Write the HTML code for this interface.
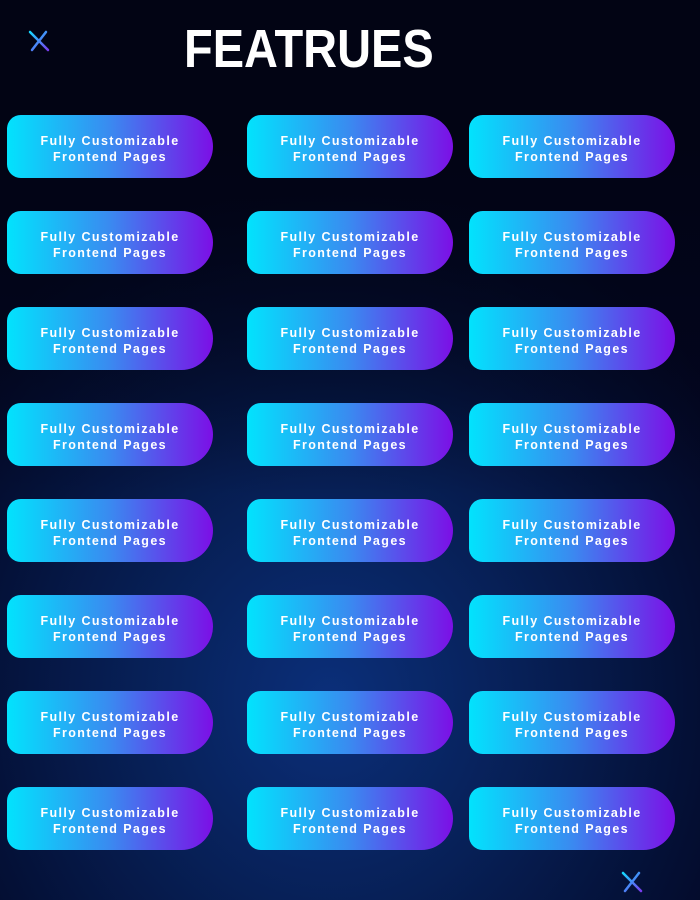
<!DOCTYPE html>
<html><head><meta charset="utf-8"><style>
*{margin:0;padding:0;box-sizing:border-box}
body{width:700px;height:900px;overflow:hidden;position:relative;font-family:"Liberation Sans",sans-serif;
background:radial-gradient(ellipse 480px 520px at 330px 700px,#0b2f7a 0%,#072057 40%,#041036 75%,#030620 100%),#030519;}
.bg2{position:absolute;inset:0;background:linear-gradient(#020414 0%,#020414 15%,rgba(2,4,20,0) 55%);}
h1{position:absolute;left:184px;top:19px;font-size:54px;font-weight:bold;color:#fff;line-height:60px;transform:scaleX(0.87);transform-origin:0 0;white-space:nowrap}
.b{position:absolute;width:206px;height:63px;border-radius:14px 32px 32px 14px;
background:linear-gradient(90deg,#02e3fd 0%,#3a8af0 50%,#7c0fe6 100%);color:#fff;
font-weight:bold;font-size:12.5px;letter-spacing:1.4px;line-height:15.5px;text-align:center;padding-top:19px}
</style></head><body><div class="bg2"></div>
<svg style="position:absolute;left:28px;top:30px" width="22" height="22"><defs><linearGradient id="g" x1="0" y1="0" x2="1" y2="1"><stop offset="0" stop-color="#14d8ff"/><stop offset="1" stop-color="#7a3cf0"/></linearGradient></defs><path d="M2 2L20 20M18 2L4 20" stroke="url(#g)" stroke-width="2.5" stroke-linecap="round"/></svg>
<svg style="position:absolute;left:621px;top:871px" width="22" height="22"><path d="M2 2L20 20M18 2L4 20" stroke="url(#g)" stroke-width="2.5" stroke-linecap="round"/></svg>
<h1>FEATRUES</h1>
<div id="c"></div>
<script>
var h='';[7,247,469].forEach(function(x){for(var r=0;r<8;r++){h+='<div class="b" style="left:'+x+'px;top:'+(115+r*96)+'px">Fully Customizable<br>Frontend Pages</div>';}});
document.getElementById('c').innerHTML=h;
</script>
</body></html>
